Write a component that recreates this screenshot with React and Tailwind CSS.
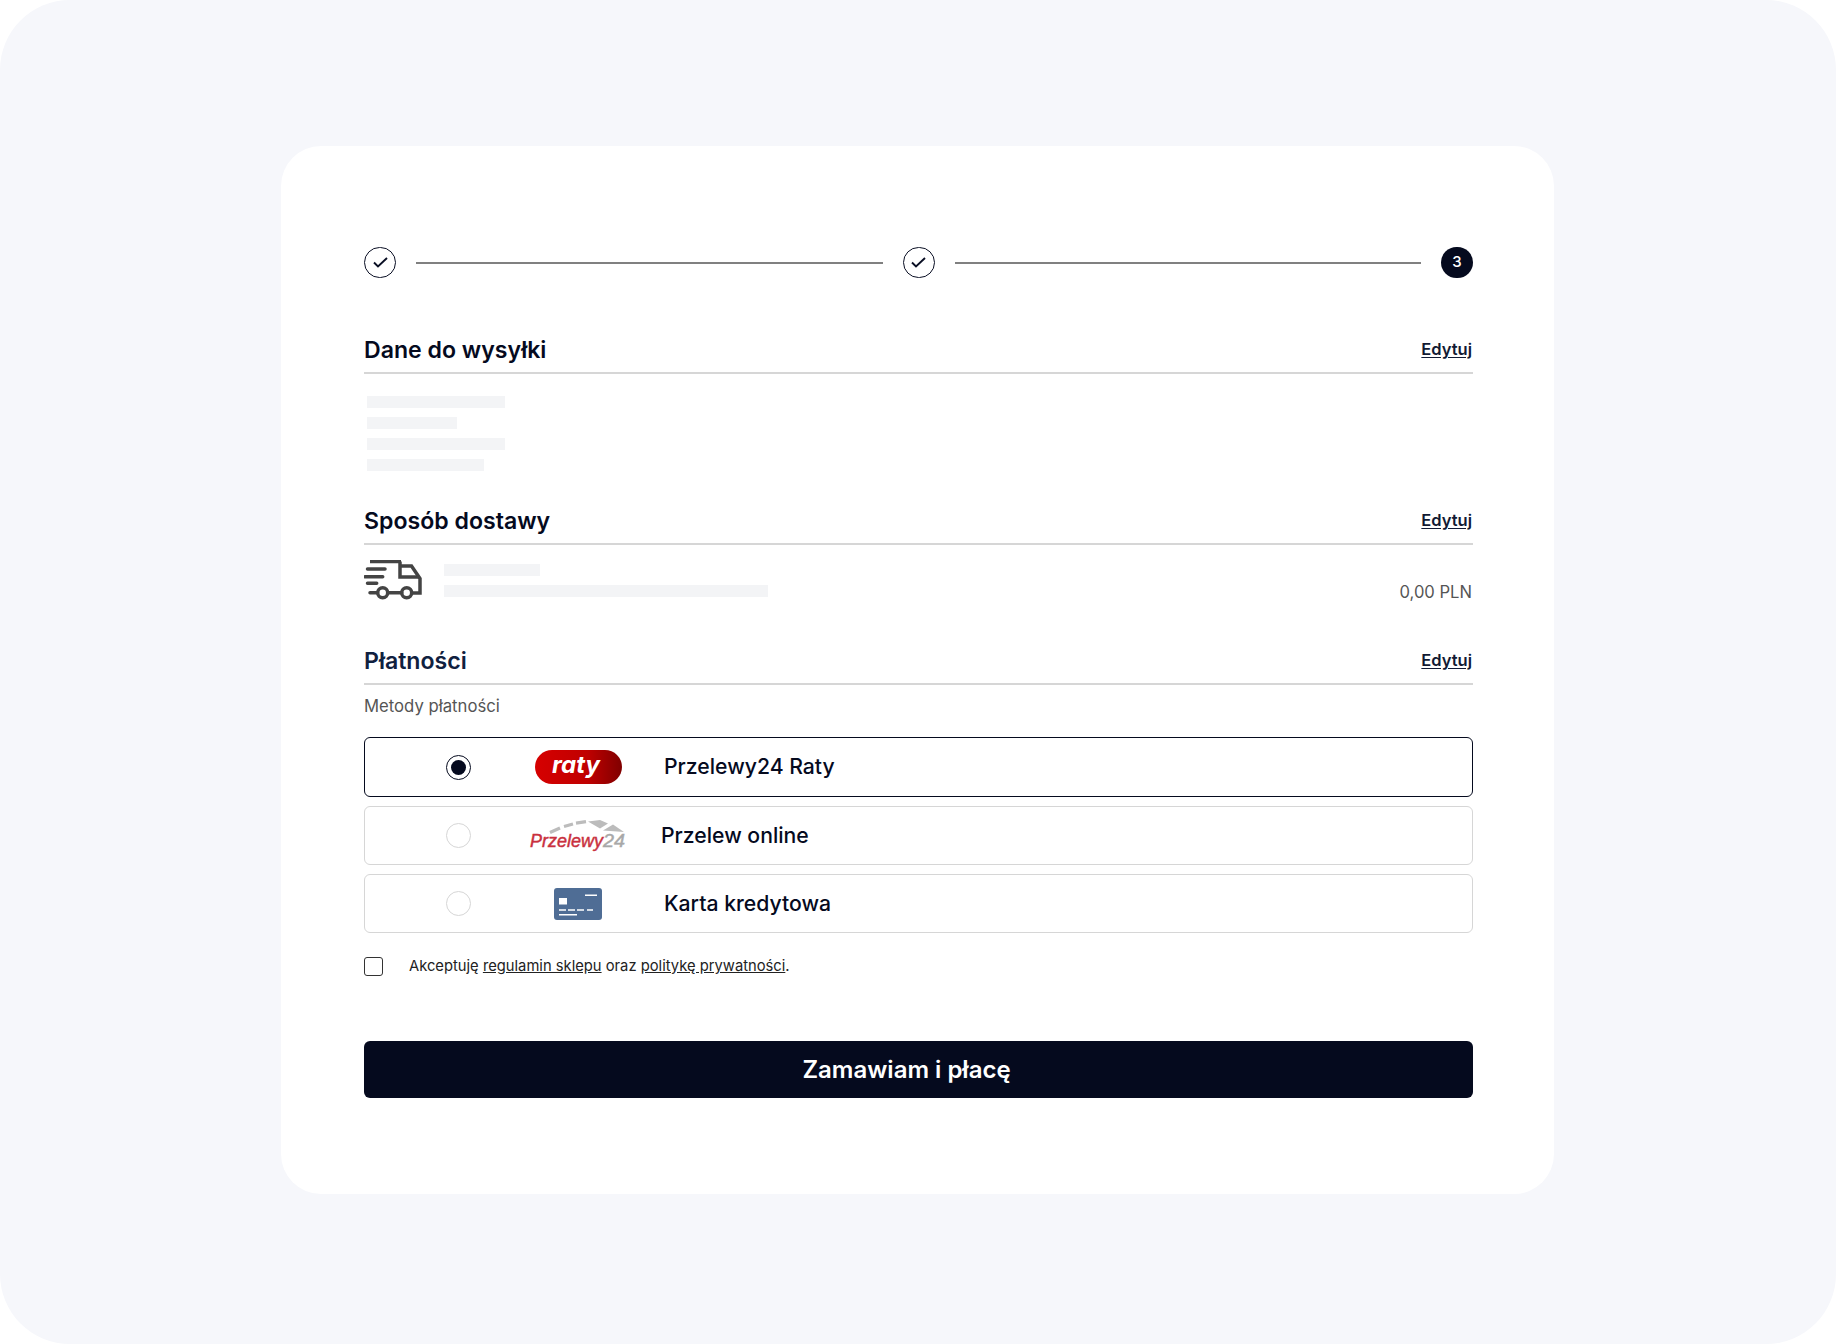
import React from 'react';

const font = { fontFamily: 'Inter, sans-serif' };

const StepDone = () => (
  <div className="w-8 h-[31px] rounded-full border border-[#0a0f24] flex items-center justify-center shrink-0">
    <svg width="15" height="11" viewBox="0 0 15 11" fill="none">
      <path d="M1 5.5 L5 9.5 L14 1" stroke="#0a0f24" strokeWidth="1.9" />
    </svg>
  </div>
);

const SectionHeader = ({ title, color = 'text-[#050a1e]' }) => (
  <div className="flex items-start justify-between border-b-2 border-[#d6d6d6] h-9">
    <h2 className={`text-[23.1px] leading-6 font-semibold ${color}`}>{title}</h2>
    <a className="text-[16.5px] leading-6 font-semibold text-[#111a33] underline underline-offset-2 mr-px -mt-px">Edytuj</a>
  </div>
);

const Truck = () => (
  <svg width="58" height="40" viewBox="0 0 58 40" fill="none" stroke="#444" strokeWidth="3.5" className="shrink-0">
    <path d="M6 1.5 H37 M36 1.5 V17 H55" />
    <path d="M36 6 H47.5 L56 18.5 V33 H48" />
    <path d="M3.5 9 H21 M1 16.7 H18.7 M3.5 23.3 H12.7 M6 32.7 H13.5 M24 32.7 H37.7" strokeLinecap="round" />
    <circle cx="18.7" cy="32.7" r="5" />
    <circle cx="42.7" cy="32.7" r="5" />
  </svg>
);

const Radio = ({ selected }) => (
  <div className={`w-[25px] h-[25px] rounded-full border flex items-center justify-center ${selected ? 'border-[#050a1e]' : 'border-[#d6d6d6]'}`}>
    {selected && <div className="w-[15px] h-[15px] rounded-full bg-[#050a1e]" />}
  </div>
);

const RatyLogo = () => (
  <div className="w-[87px] h-[34px] rounded-full bg-linear-to-r from-[#d60000] via-[#c00000] via-60% to-[#800000] flex items-center justify-center">
    <span className="text-white text-[24px] leading-none font-bold italic pb-1 pr-1">raty</span>
  </div>
);

const P24Logo = () => (
  <svg width="96" height="32" viewBox="0 0 96 32" className="overflow-visible">
    <path d="M20 12.5 L30 8 M34 6.5 L43 4 M46 3.2 L56 1.6" stroke="#bcbcbc" strokeWidth="3.2" fill="none" />
    <path d="M58 1.5 L70 0 L78 3.5 L70 8.5 Z M73 10.5 L83 4.5 L94 12 Z" fill="#bcbcbc" />
    <text x="0" y="27" fontFamily="Liberation Sans, sans-serif" fontStyle="italic" fontSize="18.5" fill="#c9303e" stroke="#c9303e" strokeWidth="0.45" textLength="73" lengthAdjust="spacingAndGlyphs">Przelewy</text>
    <text x="73" y="27" fontFamily="Liberation Sans, sans-serif" fontStyle="italic" fontSize="18.5" fill="#a8a8a8" stroke="#a8a8a8" strokeWidth="0.45" textLength="22" lengthAdjust="spacingAndGlyphs">24</text>
  </svg>
);

const CardLogo = () => (
  <svg width="48" height="32" viewBox="0 0 48 32">
    <rect width="48" height="32" rx="3" fill="#4f6d95" />
    <rect x="5" y="10" width="8" height="6.5" fill="#fff" />
    <path d="M31 7.3 H43 M5 22 H12 M14 22 H21 M23 22 H30 M33 22 H39 M5 26.7 H23" stroke="#fff" strokeWidth="1.6" />
  </svg>
);

const methods = [
  { id: 'raty', name: 'Przelewy24 Raty', logo: <RatyLogo />, selected: true, textPad: 'pl-[38px]' },
  { id: 'p24', name: 'Przelew online', logo: <P24Logo />, textPad: 'pl-[35px]' },
  { id: 'card', name: 'Karta kredytowa', logo: <CardLogo />, textPad: 'pl-[38px]' },
];

const PaymentRow = ({ method }) => (
  <div className={`rounded-md border flex items-center ${method.selected ? 'h-[60px] border-[#050a1e]' : 'h-[59px] border-[#d6d6d6]'}`}>
    <div className="w-[106px] flex justify-end shrink-0">
      <Radio selected={method.selected} />
    </div>
    <div className="w-24 ml-[59px] shrink-0 flex items-center justify-center">
      {method.logo}
    </div>
    <span className={`text-[21.2px] font-medium text-[#050a1e] ${method.textPad}`}>{method.name}</span>
  </div>
);

const Skeleton = ({ w }) => <div className={`h-3 bg-[#f3f4f6] ${w}`} />;

export default function App() {
  return (
    <div className="bg-white" style={font}>
      <div className="h-[1344px] rounded-[70px] bg-[#f6f7fb] pt-[146px]">
        <div className="w-[1273px] h-[1048px] ml-[281px] bg-white rounded-[40px] pl-[83px] pr-[81px] pt-[101px]">
          <div className="flex items-center gap-5">
            <StepDone />
            <div className="h-0.5 flex-1 bg-[#808080]" />
            <StepDone />
            <div className="h-0.5 flex-1 bg-[#808080]" />
            <div className="w-8 h-[31px] rounded-full bg-[#050a1e] text-white text-[15px] font-medium flex items-center justify-center shrink-0">3</div>
          </div>

          <div className="mt-[60px]">
            <SectionHeader title="Dane do wysyłki" />
            <div className="flex flex-col gap-[9px] mt-[22px] pl-[3px]">
              <Skeleton w="w-[138px]" />
              <Skeleton w="w-[90px]" />
              <Skeleton w="w-[138px]" />
              <Skeleton w="w-[117px]" />
            </div>
          </div>

          <div className="mt-[38px]">
            <SectionHeader title="Sposób dostawy" />
            <div className="flex mt-[15px] h-[40px]">
              <Truck />
              <div className="flex flex-col gap-[9px] pl-[22px] pt-1">
                <Skeleton w="w-[96px]" />
                <Skeleton w="w-[324px]" />
              </div>
              <span className="ml-auto text-[16.6px] leading-6 text-[#555] self-end -mb-1 mr-px">0,00 PLN</span>
            </div>
          </div>

          <div className="mt-[49px]">
            <SectionHeader title="Płatności" color="text-[#10213f]" />
            <p className="text-[16.7px] leading-6 text-[#555] mt-[9px]">Metody płatności</p>
            <div className="flex flex-col gap-[9px] mt-[19px]">
              {methods.map(m => <PaymentRow key={m.id} method={m} />)}
            </div>
          </div>

          <label className="flex items-center mt-[23px] text-[14.75px] leading-5 text-[#222]">
            <span className="w-[19px] h-[19px] rounded-[3px] border border-[#333] shrink-0" />
            <span className="pl-[26px]">
              Akceptuję <a className="underline">regulamin sklepu</a> oraz <a className="underline">politykę prywatności</a>.
            </span>
          </label>

          <button className="w-full h-[57px] mt-[65px] rounded-md bg-[#050a1e] text-white text-[24px] font-semibold pr-6">
            Zamawiam i płacę
          </button>
        </div>
      </div>
    </div>
  );
}
